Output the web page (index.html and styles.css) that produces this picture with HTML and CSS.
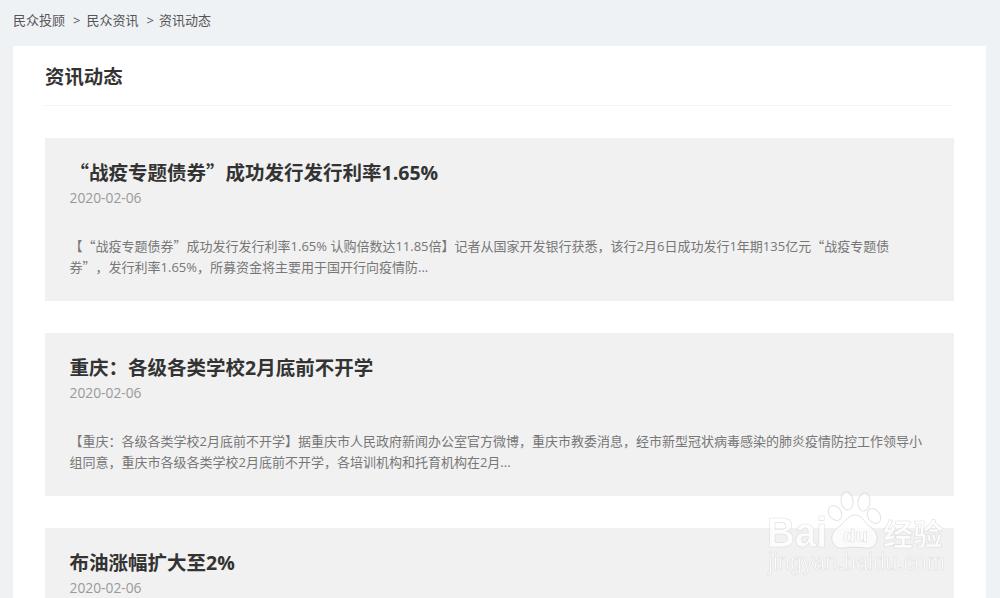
FILE: index.html
```html
<!DOCTYPE html>
<html lang="zh-CN">
<head>
<meta charset="utf-8">
<title>资讯动态</title>
<link rel="stylesheet" href="styles.css">
</head>
<body>
<nav class="crumbs">
  <a>民众投顾</a><span class="sep">&gt;</span><a>民众资讯</a><span class="sep">&gt;</span><a>资讯动态</a>
</nav>
<main class="card">
  <h1 class="page-title">资讯动态</h1>
  <div class="list">
    <article class="item">
      <h2 class="item-title"><span class="cjkq">“</span>战疫专题债券<span class="cjkq">”</span>成功发行发行利率1.65%</h2>
      <time class="item-date">2020-02-06</time>
      <p class="item-desc">【<span class="cjkq">“</span>战疫专题债券<span class="cjkq">”</span>成功发行发行利率1.65% 认购倍数达11.85倍】记者从国家开发银行获悉，该行2月6日成功发行1年期135亿元<span class="cjkq">“</span>战疫专题债券<span class="cjkq">”</span>，发行利率1.65%，所募资金将主要用于国开行向疫情防...</p>
    </article>
    <article class="item">
      <h2 class="item-title">重庆：各级各类学校2月底前不开学</h2>
      <time class="item-date">2020-02-06</time>
      <p class="item-desc">【重庆：各级各类学校2月底前不开学】据重庆市人民政府新闻办公室官方微博，重庆市教委消息，经市新型冠状病毒感染的肺炎疫情防控工作领导小组同意，重庆市各级各类学校2月底前不开学，各培训机构和托育机构在2月...</p>
    </article>
    <article class="item">
      <h2 class="item-title">布油涨幅扩大至2%</h2>
      <time class="item-date">2020-02-06</time>
    </article>
  </div>
</main>
<div class="mark" aria-label="Baidu经验">
  <svg class="mark-svg" width="182" height="92" viewBox="0 0 182 92">
    <g class="paw">
      <ellipse cx="80" cy="12" rx="6" ry="9" transform="rotate(-8 80 12)"/>
      <ellipse cx="97" cy="13" rx="6" ry="9" transform="rotate(8 97 13)"/>
      <ellipse cx="68" cy="24" rx="6" ry="8" transform="rotate(-35 68 24)"/>
      <ellipse cx="107" cy="27" rx="6" ry="8" transform="rotate(-35 107 27)"/>
      <path d="M88 26c-7 0-10 7-15 11-6 4-9 9-8 14 1 6 6 9 12 8 7-1 14-1 21 0 6 1 11-2 12-8 1-5-2-10-8-14-5-4-7-11-14-11z"/>
    </g>
    <text class="mark-en" x="0" y="58" textLength="60" lengthAdjust="spacingAndGlyphs">Bai</text>
    <text class="mark-du" x="76" y="53" textLength="25" lengthAdjust="spacingAndGlyphs">du</text>
    <text class="mark-cn" x="116" y="56">经验</text>
    <text class="mark-url" x="1" y="81" textLength="177" lengthAdjust="spacingAndGlyphs">jingyan.baidu.com</text>
  </svg>
</div>
</body>
</html>
```
FILE: styles.css
```css
* { box-sizing: border-box; }
html, body { margin: 0; height: 598px; overflow: hidden; }
body {
  position: relative;
  background: #eff2f5;
  font-family: "Open Sans", "Noto Sans CJK SC", sans-serif;
  color: #333;
  text-spacing-trim: space-all;
}
.crumbs {
  height: 46px;
  padding: 11px 0 0 13px;
  font-size: 13px;
  line-height: 18px;
  color: #555;
}
.sep { margin: 0 6px 0 8px; }
.sep:last-of-type { margin-right: 5px; }
.card {
  margin: 0 14px 0 13px;
  padding: 0 32px;
  background: #fff;
  height: 552px;
  overflow: hidden;
}
.page-title {
  margin: 0 2px 0 0;
  height: 60px;
  padding-top: 17px;
  font-size: 19.4px;
  line-height: 28px;
  font-weight: 700;
  color: #333;
  border-bottom: 1px solid #f3f3f3;
}
.list {
  display: flex;
  flex-direction: column;
  gap: 32px;
  padding-top: 32px;
}
.item {
  height: 163px;
  padding: 22px 28px 0 24.5px;
  background: #f1f1f1;
  flex: none;
}
.item-title {
  margin: 0;
  font-size: 19.5px;
  line-height: 26px;
  font-weight: 700;
  color: #333;
}
.item-date {
  display: block;
  margin-top: 2px;
  font-size: 13.8px;
  line-height: 20px;
  color: #999;
}
.item-desc {
  margin: 28px 0 0;
  font-size: 13px;
  line-height: 21px;
  color: #777;
}
.cjkq { font-family: "Noto Sans CJK SC", sans-serif; line-height: 0; }
.mark {
  position: absolute;
  left: 767px;
  top: 489px;
  line-height: 0;
  filter: blur(0.5px);
}
.paw { fill: rgba(255, 255, 255, 0.7); stroke: rgba(200, 200, 200, 0.5); stroke-width: 1; }
.mark-en, .mark-du, .mark-url, .mark-cn {
  font-family: "Liberation Sans", sans-serif;
  fill: rgba(255, 255, 255, 0.8);
  stroke: rgba(200, 200, 200, 0.55);
  stroke-width: 0.6;
}
.mark-en { font-size: 42px; font-weight: 700; }
.mark-du { font-size: 18px; font-weight: 700; }
.mark-cn { font-family: "Noto Sans CJK SC", sans-serif; font-size: 30px; font-weight: 700; }
.mark-url { font-size: 23px; }
```
